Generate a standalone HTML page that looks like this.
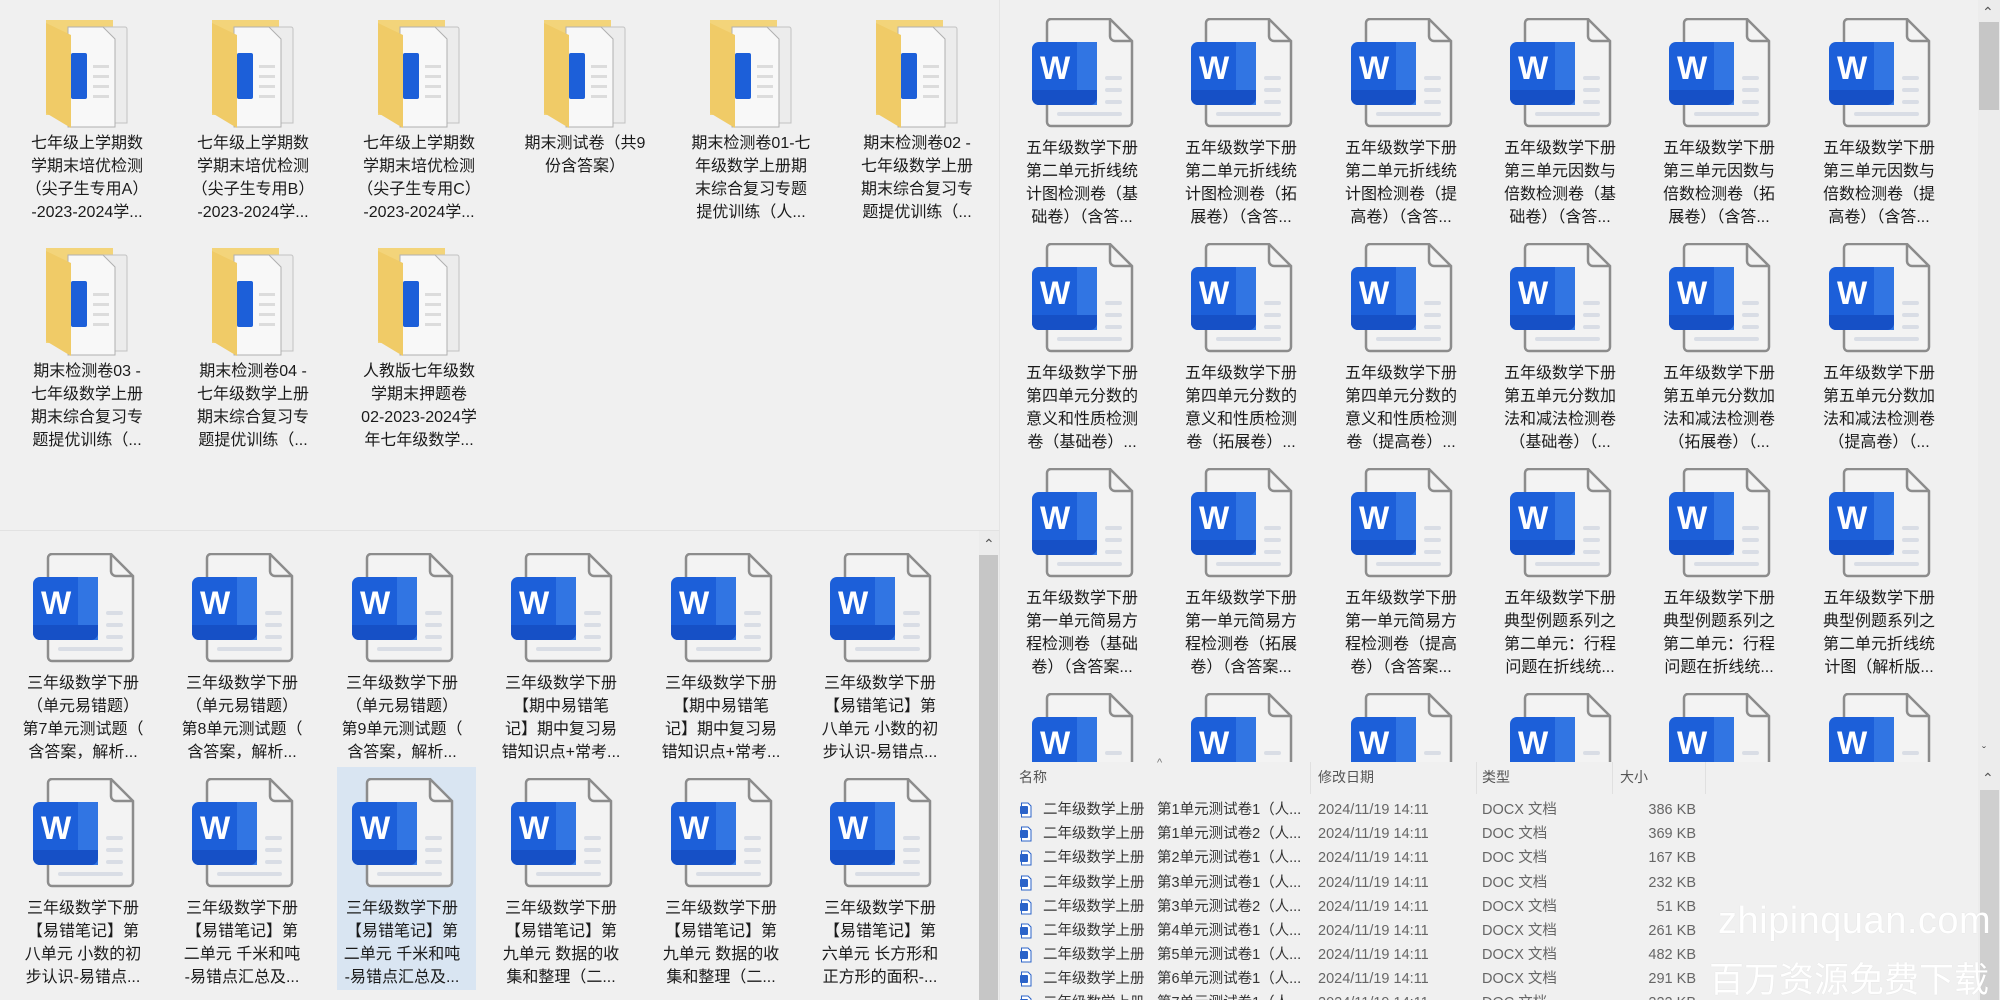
<!DOCTYPE html>
<html><head><meta charset="utf-8">
<style>
*{margin:0;padding:0;box-sizing:border-box}
html,body{width:2000px;height:1000px;overflow:hidden}
body{background:#f0f0f0;position:relative;font-family:"Liberation Sans","Noto Sans CJK SC",sans-serif;color:#1a1a1a}
.it{position:absolute;width:160px;height:220px}
.it svg{position:absolute;left:30px;top:0}
.it .t{position:absolute;left:0;width:160px;top:119px;text-align:center;font-size:16px;line-height:23px;white-space:nowrap}
.f svg{left:36px}
.f .t{top:117px}
.sel{position:absolute;left:337px;top:767px;width:139px;height:223px;background:#d9e5f2}
.hdr{position:absolute;top:767px;font-size:14px;color:#555}
.row{position:absolute;left:1010px;height:24px;font-size:14.5px;color:#333;white-space:nowrap}
.row span{position:absolute;top:0;line-height:24px;height:24px}
.wm{position:absolute;color:#fff;text-shadow:0 0 1px rgba(0,0,0,.1)}
</style></head><body>
<svg width="0" height="0" style="position:absolute">
<defs>
<symbol id="w" viewBox="0 0 110 115">
<path d="M19,1 H78 L100,23 V104 a4,4 0 0 1 -4,4 H19 a4,4 0 0 1 -4,-4 V5 a4,4 0 0 1 4,-4z" fill="#f3f3f3" stroke="#8c8c8c" stroke-width="2.5"/>
<path d="M78,1 V18 a5,5 0 0 0 5,5 H100" fill="none" stroke="#8c8c8c" stroke-width="2.5"/>
<rect x="73" y="58" width="17" height="4" rx="2" fill="#d9dde5"/>
<rect x="73" y="70" width="17" height="4" rx="2" fill="#d9dde5"/>
<rect x="73" y="82" width="17" height="4" rx="2" fill="#d9dde5"/>
<rect x="25" y="94" width="65" height="4" rx="2" fill="#d9dde5"/>
<rect x="0" y="24" width="65" height="63" rx="7" fill="#1c5fd9"/>
<rect x="45" y="24" width="20" height="63" fill="#3175e3"/>
<path d="M0,72 H65 V80 a7,7 0 0 1 -7,7 H7 a7,7 0 0 1 -7,-7z" fill="#1650c6"/>
<text x="8" y="61" font-family="Liberation Sans" font-weight="bold" font-size="32" fill="#fff">W</text>
</symbol>
<symbol id="fo" viewBox="0 0 90 115">
<path d="M3,5 H70 V100 H3z" fill="#f3d47a"/>
<path d="M36,12 H82 a2,2 0 0 1 2,2 V108 H36z" fill="#ececec" stroke="#c2c2c2"/>
<path d="M25,12 H60 L72,24 V112 H25z" fill="#f8f8f8" stroke="#b0b0b0"/>
<rect x="28" y="38" width="16" height="46" rx="2" fill="#1c5fd9"/>
<rect x="50" y="50" width="16" height="3" fill="#dcdcdc"/><rect x="50" y="60" width="16" height="3" fill="#dcdcdc"/><rect x="50" y="70" width="16" height="3" fill="#dcdcdc"/><rect x="50" y="80" width="16" height="3" fill="#dcdcdc"/>
<path d="M3,8 L28,20 V113 L3,98z" fill="#f0cb67"/>
</symbol>
<symbol id="sw" viewBox="0 0 12 16">
<path d="M1.5,1 H8 L11,4 V15 H1.5z" fill="#fff" stroke="#2b63c9"/>
<rect x="0" y="4" width="8" height="8" rx="1" fill="#2b63c9"/>
</symbol>
</defs></svg>

<div style="position:absolute;left:0;top:530px;width:1000px;height:1px;background:#e2e2e2"></div>
<div style="position:absolute;left:999px;top:0;width:1px;height:1000px;background:#e4e4e4"></div>
<div style="position:absolute;left:979px;top:531px;width:20px;height:469px;background:#ececec"></div>
<div style="position:absolute;left:983px;top:536px;font-size:14px;color:#555">&#8963;</div>
<div style="position:absolute;left:979px;top:555px;width:19px;height:445px;background:#c6c6c6"></div>
<div style="position:absolute;left:1978px;top:0;width:22px;height:1000px;background:#ececec"></div>
<div style="position:absolute;left:1982px;top:4px;font-size:14px;color:#555">&#8963;</div>
<div style="position:absolute;left:1979px;top:22px;width:20px;height:88px;background:#c6c6c6"></div>
<div style="position:absolute;left:1982px;top:744px;font-size:12px;color:#555">&#711;</div>
<div style="position:absolute;left:1982px;top:770px;font-size:14px;color:#555">&#8963;</div>
<div style="position:absolute;left:1980px;top:790px;width:19px;height:210px;background:#cfcfcf"></div>

<div class="it f" style="left:7px;top:15px"><svg width="90" height="115"><use href="#fo"/></svg><div class="t">七年级上学期数<br>学期末培优检测<br>（尖子生专用A）<br>-2023-2024学...</div></div>
<div class="it f" style="left:173px;top:15px"><svg width="90" height="115"><use href="#fo"/></svg><div class="t">七年级上学期数<br>学期末培优检测<br>（尖子生专用B）<br>-2023-2024学...</div></div>
<div class="it f" style="left:339px;top:15px"><svg width="90" height="115"><use href="#fo"/></svg><div class="t">七年级上学期数<br>学期末培优检测<br>（尖子生专用C）<br>-2023-2024学...</div></div>
<div class="it f" style="left:505px;top:15px"><svg width="90" height="115"><use href="#fo"/></svg><div class="t">期末测试卷（共9<br>份含答案）</div></div>
<div class="it f" style="left:671px;top:15px"><svg width="90" height="115"><use href="#fo"/></svg><div class="t">期末检测卷01-七<br>年级数学上册期<br>末综合复习专题<br>提优训练（人...</div></div>
<div class="it f" style="left:837px;top:15px"><svg width="90" height="115"><use href="#fo"/></svg><div class="t">期末检测卷02 -<br>七年级数学上册<br>期末综合复习专<br>题提优训练（...</div></div>
<div class="it f" style="left:7px;top:243px"><svg width="90" height="115"><use href="#fo"/></svg><div class="t">期末检测卷03 -<br>七年级数学上册<br>期末综合复习专<br>题提优训练（...</div></div>
<div class="it f" style="left:173px;top:243px"><svg width="90" height="115"><use href="#fo"/></svg><div class="t">期末检测卷04 -<br>七年级数学上册<br>期末综合复习专<br>题提优训练（...</div></div>
<div class="it f" style="left:339px;top:243px"><svg width="90" height="115"><use href="#fo"/></svg><div class="t">人教版七年级数<br>学期末押题卷<br>02-2023-2024学<br>年七年级数学...</div></div>

<div class="sel"></div>
<div class="it" style="left:3px;top:553px"><svg width="110" height="115"><use href="#w"/></svg><div class="t">三年级数学下册<br>（单元易错题）<br>第7单元测试题（<br>含答案，解析...</div></div>
<div class="it" style="left:162px;top:553px"><svg width="110" height="115"><use href="#w"/></svg><div class="t">三年级数学下册<br>（单元易错题）<br>第8单元测试题（<br>含答案，解析...</div></div>
<div class="it" style="left:322px;top:553px"><svg width="110" height="115"><use href="#w"/></svg><div class="t">三年级数学下册<br>（单元易错题）<br>第9单元测试题（<br>含答案，解析...</div></div>
<div class="it" style="left:481px;top:553px"><svg width="110" height="115"><use href="#w"/></svg><div class="t">三年级数学下册<br>【期中易错笔<br>记】期中复习易<br>错知识点+常考...</div></div>
<div class="it" style="left:641px;top:553px"><svg width="110" height="115"><use href="#w"/></svg><div class="t">三年级数学下册<br>【期中易错笔<br>记】期中复习易<br>错知识点+常考...</div></div>
<div class="it" style="left:800px;top:553px"><svg width="110" height="115"><use href="#w"/></svg><div class="t">三年级数学下册<br>【易错笔记】第<br>八单元 小数的初<br>步认识-易错点...</div></div>
<div class="it" style="left:3px;top:778px"><svg width="110" height="115"><use href="#w"/></svg><div class="t">三年级数学下册<br>【易错笔记】第<br>八单元 小数的初<br>步认识-易错点...</div></div>
<div class="it" style="left:162px;top:778px"><svg width="110" height="115"><use href="#w"/></svg><div class="t">三年级数学下册<br>【易错笔记】第<br>二单元 千米和吨<br>-易错点汇总及...</div></div>
<div class="it" style="left:322px;top:778px"><svg width="110" height="115"><use href="#w"/></svg><div class="t">三年级数学下册<br>【易错笔记】第<br>二单元 千米和吨<br>-易错点汇总及...</div></div>
<div class="it" style="left:481px;top:778px"><svg width="110" height="115"><use href="#w"/></svg><div class="t">三年级数学下册<br>【易错笔记】第<br>九单元 数据的收<br>集和整理（二...</div></div>
<div class="it" style="left:641px;top:778px"><svg width="110" height="115"><use href="#w"/></svg><div class="t">三年级数学下册<br>【易错笔记】第<br>九单元 数据的收<br>集和整理（二...</div></div>
<div class="it" style="left:800px;top:778px"><svg width="110" height="115"><use href="#w"/></svg><div class="t">三年级数学下册<br>【易错笔记】第<br>六单元 长方形和<br>正方形的面积-...</div></div>

<div style="position:absolute;left:1000px;top:0;width:978px;height:762px;overflow:hidden">
<div class="it" style="left:2px;top:18px"><svg width="110" height="115"><use href="#w"/></svg><div class="t">五年级数学下册<br>第二单元折线统<br>计图检测卷（基<br>础卷）（含答...</div></div>
<div class="it" style="left:161px;top:18px"><svg width="110" height="115"><use href="#w"/></svg><div class="t">五年级数学下册<br>第二单元折线统<br>计图检测卷（拓<br>展卷）（含答...</div></div>
<div class="it" style="left:321px;top:18px"><svg width="110" height="115"><use href="#w"/></svg><div class="t">五年级数学下册<br>第二单元折线统<br>计图检测卷（提<br>高卷）（含答...</div></div>
<div class="it" style="left:480px;top:18px"><svg width="110" height="115"><use href="#w"/></svg><div class="t">五年级数学下册<br>第三单元因数与<br>倍数检测卷（基<br>础卷）（含答...</div></div>
<div class="it" style="left:639px;top:18px"><svg width="110" height="115"><use href="#w"/></svg><div class="t">五年级数学下册<br>第三单元因数与<br>倍数检测卷（拓<br>展卷）（含答...</div></div>
<div class="it" style="left:799px;top:18px"><svg width="110" height="115"><use href="#w"/></svg><div class="t">五年级数学下册<br>第三单元因数与<br>倍数检测卷（提<br>高卷）（含答...</div></div>

<div class="it" style="left:2px;top:243px"><svg width="110" height="115"><use href="#w"/></svg><div class="t">五年级数学下册<br>第四单元分数的<br>意义和性质检测<br>卷（基础卷）...</div></div>
<div class="it" style="left:161px;top:243px"><svg width="110" height="115"><use href="#w"/></svg><div class="t">五年级数学下册<br>第四单元分数的<br>意义和性质检测<br>卷（拓展卷）...</div></div>
<div class="it" style="left:321px;top:243px"><svg width="110" height="115"><use href="#w"/></svg><div class="t">五年级数学下册<br>第四单元分数的<br>意义和性质检测<br>卷（提高卷）...</div></div>
<div class="it" style="left:480px;top:243px"><svg width="110" height="115"><use href="#w"/></svg><div class="t">五年级数学下册<br>第五单元分数加<br>法和减法检测卷<br>（基础卷）（...</div></div>
<div class="it" style="left:639px;top:243px"><svg width="110" height="115"><use href="#w"/></svg><div class="t">五年级数学下册<br>第五单元分数加<br>法和减法检测卷<br>（拓展卷）（...</div></div>
<div class="it" style="left:799px;top:243px"><svg width="110" height="115"><use href="#w"/></svg><div class="t">五年级数学下册<br>第五单元分数加<br>法和减法检测卷<br>（提高卷）（...</div></div>

<div class="it" style="left:2px;top:468px"><svg width="110" height="115"><use href="#w"/></svg><div class="t">五年级数学下册<br>第一单元简易方<br>程检测卷（基础<br>卷）（含答案...</div></div>
<div class="it" style="left:161px;top:468px"><svg width="110" height="115"><use href="#w"/></svg><div class="t">五年级数学下册<br>第一单元简易方<br>程检测卷（拓展<br>卷）（含答案...</div></div>
<div class="it" style="left:321px;top:468px"><svg width="110" height="115"><use href="#w"/></svg><div class="t">五年级数学下册<br>第一单元简易方<br>程检测卷（提高<br>卷）（含答案...</div></div>
<div class="it" style="left:480px;top:468px"><svg width="110" height="115"><use href="#w"/></svg><div class="t">五年级数学下册<br>典型例题系列之<br>第二单元：行程<br>问题在折线统...</div></div>
<div class="it" style="left:639px;top:468px"><svg width="110" height="115"><use href="#w"/></svg><div class="t">五年级数学下册<br>典型例题系列之<br>第二单元：行程<br>问题在折线统...</div></div>
<div class="it" style="left:799px;top:468px"><svg width="110" height="115"><use href="#w"/></svg><div class="t">五年级数学下册<br>典型例题系列之<br>第二单元折线统<br>计图（解析版...</div></div>

<div class="it" style="left:2px;top:693px"><svg width="110" height="115"><use href="#w"/></svg></div>
<div class="it" style="left:161px;top:693px"><svg width="110" height="115"><use href="#w"/></svg></div>
<div class="it" style="left:321px;top:693px"><svg width="110" height="115"><use href="#w"/></svg></div>
<div class="it" style="left:480px;top:693px"><svg width="110" height="115"><use href="#w"/></svg></div>
<div class="it" style="left:639px;top:693px"><svg width="110" height="115"><use href="#w"/></svg></div>
<div class="it" style="left:799px;top:693px"><svg width="110" height="115"><use href="#w"/></svg></div>
</div>

<div style="position:absolute;left:1000px;top:762px;width:978px;height:238px;background:#f0f0f0"></div>
<div class="hdr" style="left:1019px">名称</div>
<div class="hdr" style="left:1157px;top:757px;font-size:11px;color:#777">^</div>
<div class="hdr" style="left:1318px">修改日期</div>
<div class="hdr" style="left:1482px">类型</div>
<div class="hdr" style="left:1620px">大小</div>
<div style="position:absolute;left:1310px;top:762px;width:1px;height:32px;background:#e0e0e0"></div>
<div style="position:absolute;left:1476px;top:762px;width:1px;height:32px;background:#e0e0e0"></div>
<div style="position:absolute;left:1612px;top:762px;width:1px;height:32px;background:#e0e0e0"></div>
<div style="position:absolute;left:1705px;top:762px;width:1px;height:32px;background:#e0e0e0"></div>

<div class="row" style="top:798px"><svg width="12" height="16" style="position:absolute;left:10px;top:4px"><use href="#sw"/></svg><span style="left:33px">二年级数学上册</span><span style="left:147px">第1单元测试卷1（人...</span><span style="left:308px;color:#666">2024/11/19 14:11</span><span style="left:472px;color:#666">DOCX 文档</span><span style="left:600px;width:86px;text-align:right;color:#666">386 KB</span></div>
<div class="row" style="top:822px"><svg width="12" height="16" style="position:absolute;left:10px;top:4px"><use href="#sw"/></svg><span style="left:33px">二年级数学上册</span><span style="left:147px">第1单元测试卷2（人...</span><span style="left:308px;color:#666">2024/11/19 14:11</span><span style="left:472px;color:#666">DOC 文档</span><span style="left:600px;width:86px;text-align:right;color:#666">369 KB</span></div>
<div class="row" style="top:846px"><svg width="12" height="16" style="position:absolute;left:10px;top:4px"><use href="#sw"/></svg><span style="left:33px">二年级数学上册</span><span style="left:147px">第2单元测试卷1（人...</span><span style="left:308px;color:#666">2024/11/19 14:11</span><span style="left:472px;color:#666">DOC 文档</span><span style="left:600px;width:86px;text-align:right;color:#666">167 KB</span></div>
<div class="row" style="top:871px"><svg width="12" height="16" style="position:absolute;left:10px;top:4px"><use href="#sw"/></svg><span style="left:33px">二年级数学上册</span><span style="left:147px">第3单元测试卷1（人...</span><span style="left:308px;color:#666">2024/11/19 14:11</span><span style="left:472px;color:#666">DOC 文档</span><span style="left:600px;width:86px;text-align:right;color:#666">232 KB</span></div>
<div class="row" style="top:895px"><svg width="12" height="16" style="position:absolute;left:10px;top:4px"><use href="#sw"/></svg><span style="left:33px">二年级数学上册</span><span style="left:147px">第3单元测试卷2（人...</span><span style="left:308px;color:#666">2024/11/19 14:11</span><span style="left:472px;color:#666">DOCX 文档</span><span style="left:600px;width:86px;text-align:right;color:#666">51 KB</span></div>
<div class="row" style="top:919px"><svg width="12" height="16" style="position:absolute;left:10px;top:4px"><use href="#sw"/></svg><span style="left:33px">二年级数学上册</span><span style="left:147px">第4单元测试卷1（人...</span><span style="left:308px;color:#666">2024/11/19 14:11</span><span style="left:472px;color:#666">DOCX 文档</span><span style="left:600px;width:86px;text-align:right;color:#666">261 KB</span></div>
<div class="row" style="top:943px"><svg width="12" height="16" style="position:absolute;left:10px;top:4px"><use href="#sw"/></svg><span style="left:33px">二年级数学上册</span><span style="left:147px">第5单元测试卷1（人...</span><span style="left:308px;color:#666">2024/11/19 14:11</span><span style="left:472px;color:#666">DOCX 文档</span><span style="left:600px;width:86px;text-align:right;color:#666">482 KB</span></div>
<div class="row" style="top:967px"><svg width="12" height="16" style="position:absolute;left:10px;top:4px"><use href="#sw"/></svg><span style="left:33px">二年级数学上册</span><span style="left:147px">第6单元测试卷1（人...</span><span style="left:308px;color:#666">2024/11/19 14:11</span><span style="left:472px;color:#666">DOCX 文档</span><span style="left:600px;width:86px;text-align:right;color:#666">291 KB</span></div>
<div class="row" style="top:991px"><svg width="12" height="16" style="position:absolute;left:10px;top:4px"><use href="#sw"/></svg><span style="left:33px">二年级数学上册</span><span style="left:147px">第7单元测试卷1（人...</span><span style="left:308px;color:#666">2024/11/19 14:11</span><span style="left:472px;color:#666">DOC 文档</span><span style="left:600px;width:86px;text-align:right;color:#666">222 KB</span></div>

<div class="wm" style="left:1718px;top:900px;font-size:38px;letter-spacing:0.5px">zhipinquan.com</div>
<div class="wm" style="left:1709px;top:952px;font-size:35px;font-family:'Noto Sans CJK SC',sans-serif">百万资源免费下载</div>
</body></html>
